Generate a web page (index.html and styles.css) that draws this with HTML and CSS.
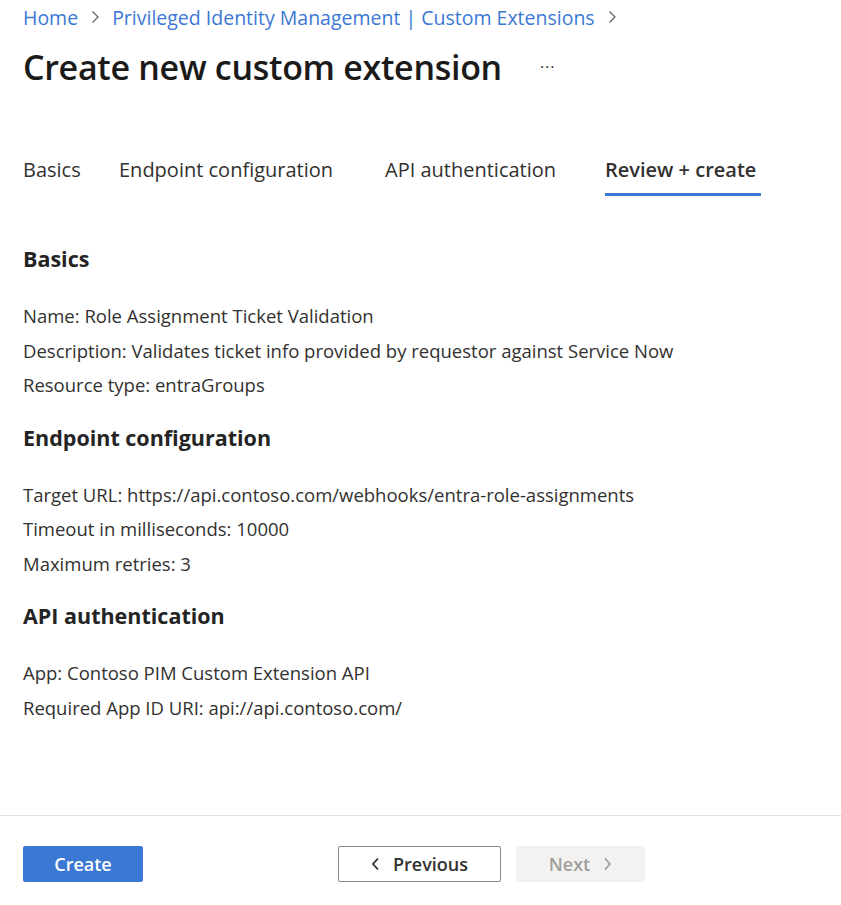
FILE: index.html
```html
<!DOCTYPE html>
<html>
<head>
<meta charset="utf-8">
<link rel="stylesheet" href="styles.css">
</head>
<body>
<div class="page">
  <nav class="crumbs">
    <a class="crumb">Home</a>
    <span class="sep"><svg width="10" height="14" viewBox="0 0 10 14"><path d="M2.5 1.5 L8 7 L2.5 12.5" fill="none" stroke="#605e5c" stroke-width="1.2"/></svg></span>
    <a class="crumb">Privileged Identity Management | Custom Extensions</a>
    <span class="sep"><svg width="10" height="14" viewBox="0 0 10 14"><path d="M2.5 1.5 L8 7 L2.5 12.5" fill="none" stroke="#605e5c" stroke-width="1.2"/></svg></span>
  </nav>
  <div class="titlerow">
    <h1 class="title">Create new custom extension</h1>
    <span class="more">···</span>
  </div>
  <div class="tabs">
    <div class="tab t1">Basics</div>
    <div class="tab t2">Endpoint configuration</div>
    <div class="tab t3">API authentication</div>
    <div class="tab t4 active">Review + create</div>
  </div>
  <section class="content">
    <h2 class="sec">Basics</h2>
    <p class="line">Name: Role Assignment Ticket Validation</p>
    <p class="line">Description: Validates ticket info provided by requestor against Service Now</p>
    <p class="line">Resource type: entraGroups</p>
    <h2 class="sec">Endpoint configuration</h2>
    <p class="line">Target URL: https://api.contoso.com/webhooks/entra-role-assignments</p>
    <p class="line">Timeout in milliseconds: 10000</p>
    <p class="line">Maximum retries: 3</p>
    <h2 class="sec">API authentication</h2>
    <p class="line">App: Contoso PIM Custom Extension API</p>
    <p class="line">Required App ID URI: api://api.contoso.com/</p>
  </section>
</div>
<footer class="footer">
  <button class="btn primary">Create</button>
  <button class="btn secondary"><svg width="10" height="14" viewBox="0 0 10 14"><path d="M7 1.5 L2 7 L7 12.5" fill="none" stroke="#323130" stroke-width="1.8"/></svg><span>Previous</span></button>
  <button class="btn disabled"><span>Next</span><svg width="10" height="14" viewBox="0 0 10 14"><path d="M3 1.5 L8 7 L3 12.5" fill="none" stroke="#a19f9d" stroke-width="1.8"/></svg></button>
</footer>
</body>
</html>
```
FILE: styles.css
```css
* { box-sizing: border-box; }
html, body { margin: 0; padding: 0; background: #fff; }
body {
  font-family: "Open Sans", "Noto Sans", sans-serif;
  color: #323130;
  width: 841px;
  height: 905px;
  position: relative;
  overflow: hidden;
}
.page { padding: 0 0 0 23px; height: 815px; }
.crumbs {
  display: flex;
  align-items: center;
  height: 34px;
  font-size: 19.5px;
  color: #3b78d4;
}
.crumb { color: #3b78d4; }
.sep { display: flex; align-items: center; margin: 0 12px; }
.titlerow { display: flex; align-items: center; height: 66px; }
.title {
  margin: 0;
  font-size: 34px;
  font-weight: 600;
  color: #1b1a19;
  letter-spacing: -0.3px;
}
.more { margin-left: 38px; font-size: 16px; color: #323130; letter-spacing: 1px; }
.tabs {
  display: flex;
  margin-top: 56px;
  height: 40px;
  font-size: 20px;
}
.tab { height: 40px; line-height: 28px; color: #323130; }
.t1 { width: 96px; }
.t2 { width: 266px; }
.t3 { width: 220px; }
.t4 { width: 156px; }
.tab.active { font-weight: 600; border-bottom: 3px solid #3b78d4; }
.content { padding-top: 46px; }
.sec {
  margin: 0;
  font-size: 21.5px;
  font-weight: 700;
  color: #242424;
  height: 34px;
  line-height: 34px;
}
.sec + .line { margin-top: 23px; }
.line {
  margin: 0;
  font-size: 18.5px;
  height: 34.5px;
  line-height: 34.5px;
}
.line + .sec { margin-top: 18px; }
.footer {
  position: absolute;
  left: 0; top: 815px;
  width: 841px;
  height: 90px;
  border-top: 1px solid #e1dfdd;
  display: flex;
  align-items: flex-start;
  padding: 30px 0 0 23px;
}
.btn {
  height: 36px;
  border-radius: 2px;
  font-family: inherit;
  font-size: 18px;
  font-weight: 600;
  display: flex;
  align-items: center;
  justify-content: center;
  gap: 12px;
  cursor: default;
}
.primary { width: 120px; background: #3b78d4; color: #fff; border: none; }
.secondary { width: 163px; margin-left: 195px; background: #fff; color: #323130; border: 1px solid #8a8886; }
.disabled { width: 129px; margin-left: 15px; background: #f3f2f1; color: #a19f9d; border: none; }
```
